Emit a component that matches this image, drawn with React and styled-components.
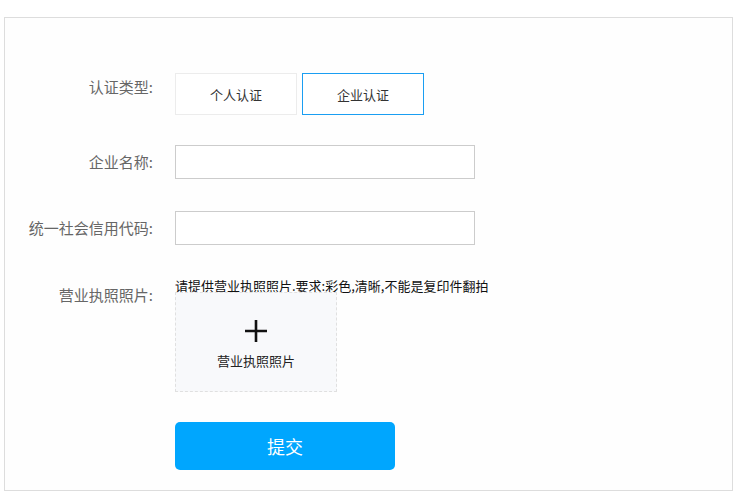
import React, { useState } from 'react'
import styled, { createGlobalStyle } from 'styled-components';

const Global = createGlobalStyle`
  body {
    margin: 0;
    background: #ffffff;
    font-family: "Noto Sans CJK SC", "Liberation Sans", sans-serif;
  }
`;

const Page = styled.div`
  padding: 17px 5px 0 4px;
`;

const Panel = styled.div`
  border: 1px solid #dddddd;
  background: #fefefe;
  height: 474px;
  padding-top: 55px;
  box-sizing: border-box;
`;

const Row = styled.div`
  display: flex;
  align-items: flex-start;
  margin-bottom: ${props => props.$gap || 0}px;
`;

const Label = styled.div`
  width: 148px;
  flex-shrink: 0;
  text-align: right;
  padding-right: 22px;
  font-size: 15px;
  color: #666666;
  line-height: ${props => props.$lh || 32}px;
  white-space: nowrap;
`;

const TypeGroup = styled.div`
  display: flex;
  gap: 5px;
`;

const TypeButton = styled.button`
  width: 122px;
  height: 42px;
  box-sizing: border-box;
  background: #ffffff;
  border: 1px solid ${props => props.$active ? '#1a9ef2' : '#ececec'};
  font-family: inherit;
  font-size: 13px;
  color: #333333;
  cursor: pointer;
  padding: 0;
`;

const Input = styled.input`
  width: 300px;
  height: 34px;
  box-sizing: border-box;
  border: 1px solid #cccccc;
  outline: none;
  padding: 0 8px;
  font-family: inherit;
  font-size: 13px;
`;

const Upload = styled.div`
  display: flex;
  flex-direction: column;
`;

const Hint = styled.div`
  font-size: 13px;
  color: #111111;
  line-height: 12px;
  white-space: nowrap;
`;

const Dropzone = styled.div`
  width: 162px;
  height: 100px;
  box-sizing: border-box;
  background: #f8f9fb;
  border: 1px dashed #e0e0e0;
  display: flex;
  flex-direction: column;
  align-items: center;
  padding-top: 26px;
  gap: 8px;
  font-size: 13px;
  color: #222222;
`;

const Submit = styled.button`
  width: 220px;
  height: 48px;
  border: none;
  border-radius: 5px;
  background: #00a6fe;
  color: #ffffff;
  font-family: inherit;
  font-size: 18px;
  cursor: pointer;
`;

const Spacer = styled.div`
  width: 170px;
  flex-shrink: 0;
`;

const PlusIcon = () => (
  <svg width="24" height="24" viewBox="0 0 24 24">
    <path d="M12 1v22M1 12h22" stroke="#111" strokeWidth="2.6" fill="none" />
  </svg>
);

export default function App() {
  const [kind, setKind] = useState('company');
  return (
    <Page>
      <Global />
      <Panel>
        <Row $gap={30}>
          <Label $lh={28}>认证类型:</Label>
          <TypeGroup>
            <TypeButton $active={kind === 'person'} onClick={() => setKind('person')}>个人认证</TypeButton>
            <TypeButton $active={kind === 'company'} onClick={() => setKind('company')}>企业认证</TypeButton>
          </TypeGroup>
        </Row>
        <Row $gap={32}>
          <Label $lh={34}>企业名称:</Label>
          <Input />
        </Row>
        <Row $gap={35}>
          <Label $lh={34}>统一社会信用代码:</Label>
          <Input />
        </Row>
        <Row $gap={30}>
          <Label $lh={30}>营业执照照片:</Label>
          <Upload>
            <Hint>请提供营业执照照片.要求:彩色,清晰,不能是复印件翻拍</Hint>
            <Dropzone>
              <PlusIcon />
              <span>营业执照照片</span>
            </Dropzone>
          </Upload>
        </Row>
        <Row>
          <Spacer />
          <Submit>提交</Submit>
        </Row>
      </Panel>
    </Page>
  );
}
